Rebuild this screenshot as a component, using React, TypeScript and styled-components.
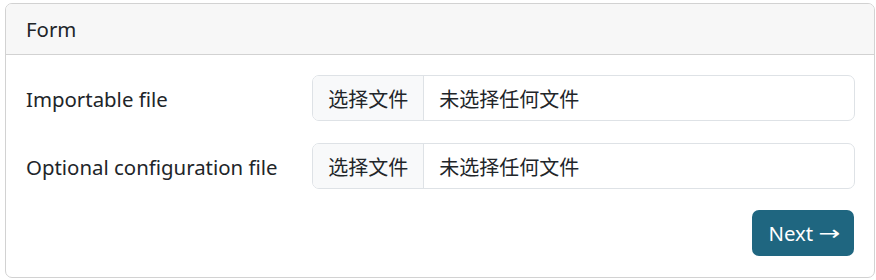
import styled, { createGlobalStyle } from 'styled-components';

const GlobalStyle = createGlobalStyle`
  html, body {
    margin: 0;
    padding: 0;
    background: #fff;
  }
  body {
    font-family: 'Noto Sans', 'Noto Sans CJK SC', sans-serif;
    color: #212529;
  }
`;

const fields = [
  { id: 'importable', label: 'Importable file' },
  { id: 'config', label: 'Optional configuration file' },
];

export default function App() {
  return (
    <>
      <GlobalStyle />
      <Page>
        <Card>
          <CardHeader>Form</CardHeader>
          <CardBody>
            {fields.map((f) => (
              <FieldRow key={f.id}>
                <Label htmlFor={f.id}>{f.label}</Label>
                <FileInput id={f.id} as='label'>
                  <FileButton>选择文件</FileButton>
                  <FileName>未选择任何文件</FileName>
                </FileInput>
              </FieldRow>
            ))}
            <Actions>
              <NextButton type='button'>
                Next <Arrow>→</Arrow>
              </NextButton>
            </Actions>
          </CardBody>
        </Card>
      </Page>
    </>
  );
}

// ROOT
const Page = styled.div`
  padding: 3px 1px 0 5px;
  width: 870px;
`;

const Card = styled.div`
  border: 1px solid #d2d2d2;
  border-radius: 7px;
  overflow: hidden;
  background: #fff;
`;

const CardHeader = styled.div`
  background: #f7f7f7;
  border-bottom: 1px solid #d2d2d2;
  padding: 0 20px;
  height: 50px;
  display: flex;
  align-items: center;
  font-size: 20.4px;
`;

const CardBody = styled.div`
  padding: 20px 19px 21px;
  display: flex;
  flex-direction: column;
  gap: 22px;
`;

// FIELD
const FieldRow = styled.div`
  display: grid;
  grid-template-columns: calc((100% + 28.8px) / 3 - 28.8px) 1fr;
  column-gap: 28.8px;
  align-items: center;
`;

const Label = styled.label`
  font-size: 20.4px;
  padding: 2px 0 0 1px;
  white-space: nowrap;
`;

const FileInput = styled.div`
  display: flex;
  height: 46px;
  box-sizing: border-box;
  margin-left: 1px;
  border: 1px solid #dee2e6;
  border-radius: 7px;
  overflow: hidden;
  font-size: 20px;
  font-family: 'Noto Sans CJK SC', sans-serif;
  cursor: pointer;
`;

const FileButton = styled.span`
  display: flex;
  align-items: center;
  padding: 0 15px;
  background: #f8f9fa;
  border-right: 1px solid #dee2e6;
`;

const FileName = styled.span`
  display: flex;
  align-items: center;
  padding-left: 15px;
`;

// BUTTON
const Actions = styled.div`
  display: flex;
  justify-content: flex-end;
  margin-top: -1px;
`;

const NextButton = styled.button`
  height: 46px;
  padding: 0 16px;
  margin-right: 1px;
  border: none;
  border-radius: 7px;
  background: #1f6680;
  color: #fff;
  font-family: 'Noto Sans', sans-serif;
  font-size: 20.4px;
  cursor: pointer;
  display: flex;
  align-items: center;
  gap: 8px;
`;

const Arrow = styled.span`
  font-family: 'DejaVu Sans', sans-serif;
  font-size: 20px;
  transform: scaleX(1.3);
  display: inline-block;
`;
